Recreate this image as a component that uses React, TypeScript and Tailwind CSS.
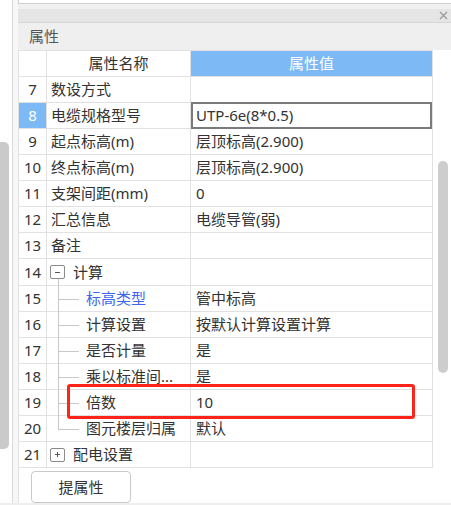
import React from "react";

type Prop = {
  n: number;
  name: string;
  value?: string;
  kind?: "plain" | "group" | "child" | "last";
  open?: boolean;
  selected?: boolean;
  link?: boolean;
};

const rows: Prop[] = [
  { n: 7, name: "数设方式" },
  { n: 8, name: "电缆规格型号", value: "UTP-6e(8*0.5)", selected: true },
  { n: 9, name: "起点标高(m)", value: "层顶标高(2.900)" },
  { n: 10, name: "终点标高(m)", value: "层顶标高(2.900)" },
  { n: 11, name: "支架间距(mm)", value: "0" },
  { n: 12, name: "汇总信息", value: "电缆导管(弱)" },
  { n: 13, name: "备注" },
  { n: 14, name: "计算", kind: "group", open: true },
  { n: 15, name: "标高类型", value: "管中标高", kind: "child", link: true },
  { n: 16, name: "计算设置", value: "按默认计算设置计算", kind: "child" },
  { n: 17, name: "是否计量", value: "是", kind: "child" },
  { n: 18, name: "乘以标准间...", value: "是", kind: "child" },
  { n: 19, name: "倍数", value: "10", kind: "child" },
  { n: 20, name: "图元楼层归属", value: "默认", kind: "last" },
  { n: 21, name: "配电设置", kind: "group" },
];

// little +/- square used by the grouped rows
function Toggle({ open }: { open?: boolean }) {
  return (
    <span className="flex h-[14px] w-[15px] items-center justify-center rounded-[2px] border border-[#8a8a8a] bg-white">
      <svg width="9" height="9" viewBox="0 0 9 9">
        <path d="M2 4.5h5" stroke="#555" strokeWidth="1" />
        {!open && <path d="M4.5 2v5" stroke="#555" strokeWidth="1" />}
      </svg>
    </span>
  );
}

function NameCell({ row }: { row: Prop }) {
  const kind = row.kind ?? "plain";
  if (kind === "group") {
    return (
      <div className="relative flex h-full items-center pl-[3px]">
        <Toggle open={row.open} />
        <span className="ml-[8px]">{row.name}</span>
        {row.open && (
          <span className="absolute -bottom-px left-[11px] h-[7px] w-px bg-[#c8c8c8]" />
        )}
      </div>
    );
  }
  if (kind === "child" || kind === "last") {
    return (
      <div className="relative flex h-full items-center pl-[39px]">
        <span
          className={
            kind === "last"
              ? "absolute left-[11px] top-0 h-1/2 w-px bg-[#c8c8c8]"
              : "absolute -bottom-px left-[11px] top-0 w-px bg-[#c8c8c8]"
          }
        />
        <span className="absolute left-[11px] top-1/2 h-px w-[21px] bg-[#c8c8c8]" />
        <span className={row.link ? "text-[#3d66ee]" : ""}>{row.name}</span>
      </div>
    );
  }
  return <div className="flex h-full items-center pl-[4px]">{row.name}</div>;
}

function DataRow({ row }: { row: Prop }) {
  return (
    <div
      className={
        row.n === 14
          ? "flex h-[27px] border-b border-[#e1e1e1]"
          : "flex h-[26px] border-b border-[#e1e1e1]"
      }
    >
      <div
        className={
          row.selected
            ? "flex w-[28px] items-center justify-center border-r border-[#e1e1e1] bg-[#7db9f4] text-white"
            : "flex w-[28px] items-center justify-center border-r border-[#e1e1e1]"
        }
      >
        {row.n}
      </div>
      <div className="w-[144px] border-r border-[#e1e1e1]">
        <NameCell row={row} />
      </div>
      <div className="w-[242px] border-r border-[#e1e1e1]">
        {row.selected ? (
          <div className="-mt-px flex h-[27px] items-center border-2 border-[#7a7a7a] bg-white pl-[3px]">
            {row.value}
          </div>
        ) : (
          <div className="flex h-full items-center pl-[5px]">{row.value}</div>
        )}
      </div>
    </div>
  );
}

export default function App() {
  return (
    <div className="relative flex h-[505px] w-[451px] overflow-hidden bg-[#eeeeee] text-[15px] text-[#333] [font-family:'Noto_Sans','Noto_Sans_CJK_SC',sans-serif]">
      {/* left sidebar scroll strip */}
      <div className="relative h-[503px] w-[13px] border-r border-[#dadada] bg-white">
        <div className="absolute left-0 top-[142px] h-[307px] w-[9px] rounded-r-[5px] bg-[#cacaca]" />
      </div>
      <div className="h-[503px] w-[5px] bg-[#f7f7f7]" />

      <div className="flex h-[503px] flex-1 flex-col bg-white">
        <div className="h-[4px] border-b border-l border-[#cfcfcf] bg-white" />
        <div className="h-[5px] bg-[#f0f0f0]" />
        <div className="flex h-[14px] items-center justify-end border-b border-[#d6d6d6] bg-[#e5e5e5] pr-[3px]">
          <svg width="9" height="9" viewBox="0 0 9 9">
            <path d="M1 1l7 7M8 1l-7 7" stroke="#9a9a9a" strokeWidth="1.3" />
          </svg>
        </div>
        <div className="flex h-[27px] items-center bg-[#efefef] pl-[11px] text-[#555]">属性</div>

        <div className="flex flex-1">
          <div className="flex flex-col border-l border-[#e1e1e1]">
            <div className="flex h-[27px] border-y border-[#e1e1e1]">
              <div className="w-[28px] border-r border-[#e1e1e1]" />
              <div className="flex w-[144px] items-center justify-center border-r border-[#e1e1e1]">
                属性名称
              </div>
              <div className="flex w-[242px] items-center justify-center border-r border-[#e1e1e1] bg-[#7db9f4] text-white">
                属性值
              </div>
            </div>
            {rows.map((r) => (
              <DataRow key={r.n} row={r} />
            ))}
            <div className="flex flex-1 items-start pl-[12px] pt-[3px]">
              <button className="h-[32px] w-[100px] rounded-[4px] border border-[#c9c9c9] bg-white text-[#333]">
                提属性
              </button>
            </div>
          </div>
          <div className="relative flex-1">
            <div className="absolute left-[5px] top-[111px] h-[212px] w-[10px] rounded-full bg-[#cdcdcd]" />
          </div>
        </div>
      </div>

      {/* highlight annotation */}
      <div className="absolute left-[67px] top-[384px] h-[35px] w-[348px] rounded-[3px] border-[3px] border-[#ff2419]" />
    </div>
  );
}
